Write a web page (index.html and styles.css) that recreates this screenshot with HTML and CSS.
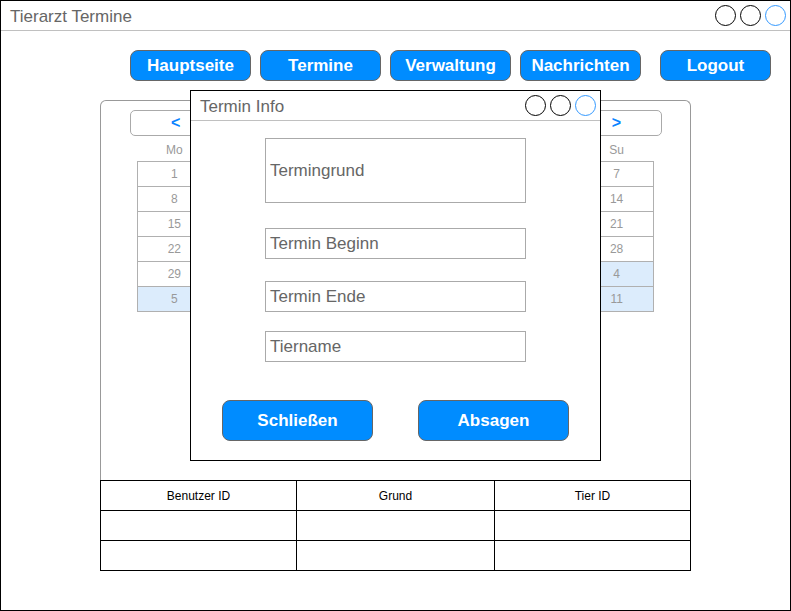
FILE: index.html
```html
<!DOCTYPE html>
<html lang="de">
<head>
<meta charset="utf-8">
<title>Tierarzt Termine</title>
<link rel="stylesheet" href="styles.css">
</head>
<body>
<div class="window">
  <div class="titlebar">
    <span class="title">Tierarzt Termine</span>
    <div class="dots">
      <span class="dot"></span><span class="dot"></span><span class="dot dot-blue"></span>
    </div>
  </div>

  <nav class="nav">
    <button class="btn nav-btn">Hauptseite</button>
    <button class="btn nav-btn">Termine</button>
    <button class="btn nav-btn">Verwaltung</button>
    <button class="btn nav-btn">Nachrichten</button>
    <button class="btn nav-btn logout">Logout</button>
  </nav>

  <section class="calendar">
    <div class="cal-head">
      <span class="arrow">&lt;</span>
      <span class="month"></span>
      <span class="arrow">&gt;</span>
    </div>
    <table class="cal-grid">
      <thead>
        <tr><th>Mo</th><th>Tu</th><th>We</th><th>Th</th><th>Fr</th><th>Sa</th><th>Su</th></tr>
      </thead>
      <tbody>
        <tr><td>1</td><td>2</td><td>3</td><td>4</td><td>5</td><td>6</td><td>7</td></tr>
        <tr><td>8</td><td>9</td><td>10</td><td>11</td><td>12</td><td>13</td><td>14</td></tr>
        <tr><td>15</td><td>16</td><td>17</td><td>18</td><td>19</td><td>20</td><td>21</td></tr>
        <tr><td>22</td><td>23</td><td>24</td><td>25</td><td>26</td><td>27</td><td>28</td></tr>
        <tr><td>29</td><td>30</td><td>31</td><td class="next">1</td><td class="next">2</td><td class="next">3</td><td class="next">4</td></tr>
        <tr><td class="next">5</td><td class="next">6</td><td class="next">7</td><td class="next">8</td><td class="next">9</td><td class="next">10</td><td class="next">11</td></tr>
      </tbody>
    </table>
  </section>

  <table class="list">
    <tr><th>Benutzer ID</th><th>Grund</th><th>Tier ID</th></tr>
    <tr><td></td><td></td><td></td></tr>
    <tr><td></td><td></td><td></td></tr>
  </table>

  <div class="modal">
    <div class="titlebar modal-bar">
      <span class="title">Termin Info</span>
      <div class="dots">
        <span class="dot"></span><span class="dot"></span><span class="dot dot-blue"></span>
      </div>
    </div>
    <div class="modal-body">
      <div class="field field-big">Termingrund</div>
      <div class="field f-begin">Termin Beginn</div>
      <div class="field f-end">Termin Ende</div>
      <div class="field f-name">Tiername</div>
      <div class="actions">
        <button class="btn action">Schließen</button>
        <button class="btn action">Absagen</button>
      </div>
    </div>
  </div>
</div>
</body>
</html>
```

FILE: styles.css
```css
* { box-sizing: border-box; }
html, body { margin: 0; padding: 0; background: #fff; }
body { font-family: "Liberation Sans", Arial, sans-serif; }

.window {
  position: relative;
  width: 791px;
  height: 611px;
  border: 1px solid #000;
  background: #fff;
}

.titlebar {
  display: flex;
  align-items: center;
  justify-content: space-between;
  height: 30px;
  border-bottom: 1px solid #c0c0c0;
  padding: 0 4px 0 9px;
}
.title { font-size: 17px; color: #666; padding-top: 3px; }
.dots { display: flex; gap: 4px; }
.dot {
  width: 21px; height: 21px;
  border: 1px solid #000;
  border-radius: 50%;
  background: #fff;
}
.dot-blue { border-color: #3399ff; }

.nav {
  display: flex;
  margin: 19px 0 0 129px;
  height: 31px;
  gap: 9px;
}
.btn {
  font-family: "Liberation Sans", Arial, sans-serif;
  font-weight: bold;
  font-size: 17px;
  color: #fff;
  background: #008cff;
  border: 1px solid #666;
  border-radius: 8px;
  padding: 0;
}
.nav-btn { width: 121px; height: 31px; }
.logout { width: 111px; margin-left: 10px; }

.calendar {
  margin: 19px 0 0 99px;
  width: 591px;
  height: 380px;
  border: 1px solid #999;
  border-bottom: none;
  border-radius: 6px 6px 0 0;
  padding-top: 9px;
}
.cal-head {
  display: flex;
  justify-content: space-between;
  align-items: center;
  margin: 0 0 0 29px;
  width: 532px;
  height: 26px;
  border: 1px solid #aaa;
  border-radius: 5px;
  padding: 0 40px;
}
.arrow { color: #0a84ff; font-weight: bold; font-size: 16px; }

.cal-grid {
  border-collapse: collapse;
  margin: 0 0 0 36px;
  table-layout: fixed;
  width: 517px;
}
.cal-grid th {
  font-weight: normal;
  font-size: 12px;
  color: #999;
  height: 25px;
  padding: 3px 0 0;
  text-align: center;
  vertical-align: middle;
}
.cal-grid td {
  border: 1px solid #b0b0b0;
  height: 25px;
  padding: 0;
  text-align: center;
  font-size: 12px;
  color: #999;
}
.cal-grid td.next { background: #dcecfc; }

.list {
  border-collapse: collapse;
  margin-left: 99px;
  width: 591px;
  table-layout: fixed;
}
.list th, .list td {
  border: 1px solid #000;
  height: 30px;
  padding: 0;
  text-align: center;
  font-weight: normal;
  font-size: 12px;
  color: #000;
}
.list th:nth-child(1) { width: 196px; }
.list th:nth-child(2) { width: 198px; }

.modal {
  position: absolute;
  left: 189px;
  top: 89px;
  width: 411px;
  height: 371px;
  border: 1px solid #000;
  background: #fff;
}
.modal-bar { padding: 0 4px 0 9px; }

.modal-body {
  padding: 17px 0 0 74px;
}
.field {
  width: 261px;
  height: 31px;
  border: 1px solid #aaa;
  font-size: 17px;
  color: #666;
  padding-left: 4px;
  display: flex;
  align-items: center;
}
.field-big { height: 65px; }
.f-begin { margin-top: 25px; }
.f-end { margin-top: 22px; }
.f-name { margin-top: 19px; }

.actions {
  display: flex;
  gap: 45px;
  margin: 38px 0 0 -43px;
}
.action { width: 151px; height: 41px; }
```
